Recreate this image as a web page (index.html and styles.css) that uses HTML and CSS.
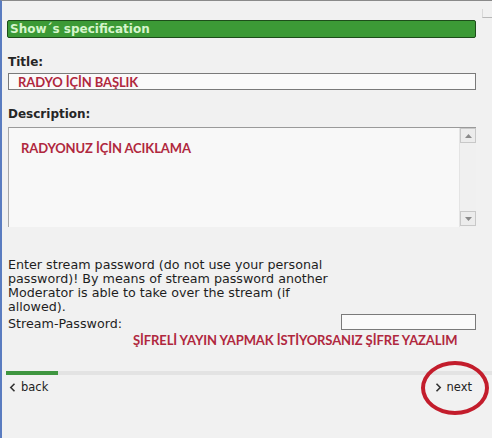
FILE: index.html
```html
<!DOCTYPE html>
<html>
<head>
<meta charset="utf-8">
<link rel="stylesheet" href="styles.css">
</head>
<body>
<div class="page">
  <div class="corner"></div>
  <div class="header">Show´s specification</div>
  <div class="label label-title">Title:</div>
  <div class="input title-input"><span class="note">RADYO İÇİN BAŞLIK</span></div>
  <div class="label label-desc">Description:</div>
  <div class="textarea">
    <div class="ta-text"><span class="note">RADYONUZ İÇİN ACIKLAMA</span></div>
    <div class="scroll">
      <div class="sbtn"><svg width="7" height="4" viewBox="0 0 7 4"><path d="M0 4 L3.5 0 L7 4Z" fill="#8a8a8a"/></svg></div>
      <div class="sbtn"><svg width="7" height="4" viewBox="0 0 7 4"><path d="M0 0 L3.5 4 L7 0Z" fill="#8a8a8a"/></svg></div>
    </div>
  </div>
  <div class="pw-section">
    <p class="pw-text">Enter stream password (do not use your personal password)! By means of stream password another Moderator is able to take over the stream (if allowed).</p>
    <div class="pw-row">
      <span class="pw-label">Stream-Password:</span>
      <div class="input pw-input"></div>
    </div>
    <div class="pw-note"><span class="note">ŞİFRELİ YAYIN YAPMAK İSTİYORSANIZ ŞİFRE YAZALIM</span></div>
  </div>
  <div class="progress"><div class="progress-fill"></div></div>
  <div class="nav">
    <span class="nav-link"><svg class="chev" width="7" height="9" viewBox="0 0 7 9"><path d="M5.5 0.8 L1.8 4.5 L5.5 8.2" fill="none" stroke="#333" stroke-width="1.6"/></svg>back</span>
    <span class="nav-link next"><svg class="chev" width="7" height="9" viewBox="0 0 7 9"><path d="M1.5 0.8 L5.2 4.5 L1.5 8.2" fill="none" stroke="#333" stroke-width="1.6"/></svg>next<span class="ring"></span></span>
  </div>
</div>
</body>
</html>
```
FILE: styles.css
```css
html, body {
  margin: 0;
  padding: 0;
  background: #f0f0f0;
}
.page {
  position: relative;
  width: 490px;
  height: 437px;
  border-left: 2px solid #5a7cc0;
  border-top: 1px solid #8a8a8a;
  background: #f1f1f1;
  font-family: "DejaVu Sans", Verdana, sans-serif;
  color: #222;
  overflow: hidden;
}
.corner {
  position: absolute;
  right: 0;
  top: 8px;
  width: 9px;
  height: 8px;
  border-bottom: 1px solid #b8b8b8;
  border-left: 1px solid #d8d8d8;
}
.header {
  margin: 19px 0 0 5px;
  width: 465px;
  height: 16px;
  line-height: 16px;
  padding: 0 0 0 2px;
  box-sizing: content-box;
  background: #3c9a36;
  border: 1px solid #1d4d1a;
  border-radius: 2px;
  color: #d6f5cc;
  font-size: 12px;
  font-weight: bold;
}
.label {
  font-size: 12px;
  font-weight: bold;
  margin-left: 6px;
  color: #262626;
}
.label-title { margin-top: 16px; line-height: 17px; }
.label-desc { margin-top: 16px; line-height: 17px; }
.input {
  background: #fafafa;
  border: 1px solid #7a7a7a;
  box-sizing: border-box;
}
.title-input {
  margin: 2px 0 0 6px;
  width: 468px;
  height: 17px;
  padding-left: 9px;
  line-height: 15px;
}
.note {
  font-family: "Lato", "Open Sans", sans-serif;
  font-weight: bold;
  color: #b0283e;
  font-size: 13px;
  letter-spacing: -0.1px;
}
.textarea {
  margin: 4px 0 0 6px;
  width: 468px;
  height: 100px;
  box-sizing: border-box;
  border-top: 1px solid #9a9a9a;
  border-left: 1px solid #a8a8a8;
  background: #f8f8f8;
  display: flex;
}
.ta-text {
  flex: 1;
  padding: 12px 0 0 12px;
  line-height: 16px;
}
.scroll {
  width: 16px;
  display: flex;
  flex-direction: column;
  justify-content: space-between;
  background: #f0f0f0;
  border-left: 1px solid #e4e4e4;
  padding-bottom: 1px;
}
.sbtn {
  height: 15px;
  border: 1px solid #c8c8c8;
  background: #ececec;
  display: flex;
  align-items: center;
  justify-content: center;
  box-sizing: border-box;
}
.pw-section {
  margin: 31px 0 0 6px;
  font-size: 12.7px;
  line-height: 14px;
  color: #1e1e1e;
}
.pw-text {
  margin: 0;
  width: 340px;
}
.pw-row {
  display: flex;
  justify-content: space-between;
  align-items: flex-end;
  width: 468px;
}
.pw-input {
  width: 135px;
  height: 16px;
  margin-bottom: 1px;
}
.pw-note {
  margin: 1px 0 0 125px;
  line-height: 16px;
}
.progress {
  margin: 22px 0 0 4px;
  height: 4px;
  width: 486px;
  background: #e3e3e3;
}
.progress-fill {
  width: 52px;
  height: 4px;
  background: #3f9640;
}
.nav {
  display: flex;
  justify-content: space-between;
  margin: 5px 0 0 7px;
  width: 463px;
  font-size: 11.5px;
  color: #222;
}
.nav-link {
  position: relative;
  display: flex;
  align-items: center;
  gap: 5px;
}
.ring {
  position: absolute;
  left: -14px;
  top: -19px;
  width: 60px;
  height: 46px;
  border: 4px solid #c31d2c;
  border-radius: 50%;
}
```
